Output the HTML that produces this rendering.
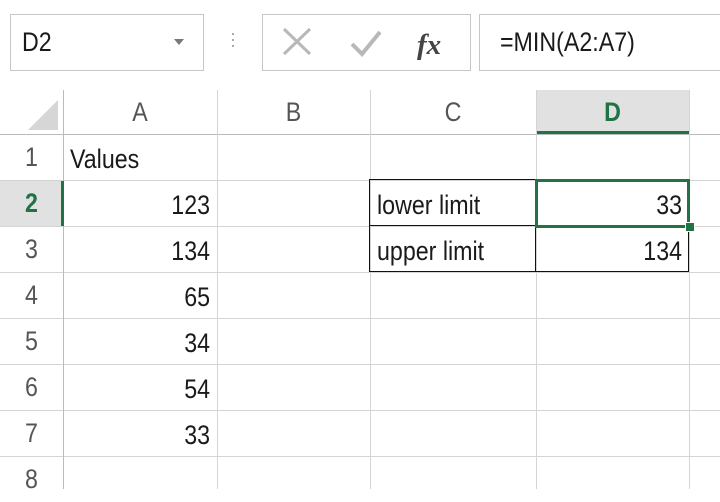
<!DOCTYPE html>
<html><head><style>
body{margin:0;width:720px;height:489px;overflow:hidden;background:#fff;font-family:"Liberation Sans",sans-serif;position:relative;color:#1a1a1a}
.a{position:absolute}
.box{position:absolute;border:1px solid #c6c6c6;background:#fff;box-sizing:border-box}
.t{position:absolute;font-size:27px;line-height:46px;transform:scaleX(.86)}
.r{transform-origin:right center;text-align:right}
.l{transform-origin:left center}
.hl{position:absolute;left:0;width:720px;height:1px;background:#d4d4d4}
.vl{position:absolute;top:90px;width:1px;height:399px;background:#d4d4d4}
.rh{position:absolute;left:0;width:63px;text-align:center;font-size:27px;line-height:46px;color:#555;transform:scaleX(.86)}
.ch{position:absolute;top:90px;height:44px;line-height:44px;text-align:center;font-size:27px;color:#555;transform:scaleX(.86)}
</style></head><body>
<div class="box" style="left:10px;top:14px;width:194px;height:57px"></div>
<div class="t l" style="left:22px;top:19px">D2</div>
<div class="a" style="left:174px;top:39px;width:0;height:0;border-left:5px solid transparent;border-right:5px solid transparent;border-top:6px solid #777"></div>
<div class="a" style="left:232px;top:33px;width:2px;height:2px;background:#aaa;box-shadow:0 6px #aaa,0 12px #aaa"></div>
<div class="box" style="left:262px;top:14px;width:209px;height:57px"></div>
<svg class="a" style="left:262px;top:14px" width="209" height="57"><path d="M22 15 L48 40 M48 15 L22 40" stroke="#b8b8b8" stroke-width="3"/><path d="M90 30 L100 40 L118 18" stroke="#b8b8b8" stroke-width="4" fill="none"/><text x="155" y="40" font-family="Liberation Serif" font-style="italic" font-weight="bold" font-size="29" fill="#444">fx</text></svg>
<div class="box" style="left:479px;top:14px;width:250px;height:57px"></div>
<div class="t l" style="left:500px;top:19px">=MIN(A2:A7)</div>
<div class="a" style="left:536px;top:90px;width:153px;height:44px;background:#e1e1e1"></div>
<div class="a" style="left:536px;top:131px;width:153px;height:3px;background:#217346"></div>
<svg class="a" style="left:20px;top:92px" width="40" height="40"><path d="M38 8 L38 38 L8 38 Z" fill="#d6d6d6"/></svg>
<div class="ch" style="left:63px;width:154px">A</div>
<div class="ch" style="left:217px;width:153px">B</div>
<div class="ch" style="left:370px;width:166px">C</div>
<div class="ch" style="left:536px;width:153px;color:#217346;font-weight:bold">D</div>
<div class="hl" style="top:134px;background:#bbb"></div>
<div class="hl" style="top:180px"></div><div class="hl" style="top:226px"></div><div class="hl" style="top:272px"></div><div class="hl" style="top:318px"></div><div class="hl" style="top:364px"></div><div class="hl" style="top:410px"></div><div class="hl" style="top:456px"></div>
<div class="vl" style="left:63px;background:#bbb"></div><div class="vl" style="left:217px"></div><div class="vl" style="left:370px"></div><div class="vl" style="left:536px"></div><div class="vl" style="left:689px"></div>
<div class="a" style="left:0;top:181px;width:63px;height:45px;background:#e1e1e1"></div>
<div class="a" style="left:61px;top:181px;width:3px;height:45px;background:#217346"></div>
<div class="rh" style="top:134px">1</div>
<div class="rh" style="top:180px;color:#217346;font-weight:bold">2</div>
<div class="rh" style="top:226px">3</div><div class="rh" style="top:272px">4</div><div class="rh" style="top:318px">5</div><div class="rh" style="top:364px">6</div><div class="rh" style="top:410px">7</div><div class="rh" style="top:456px">8</div>
<div class="t l" style="left:70px;top:136px">Values</div>
<div class="t r" style="right:510px;top:182px">123</div>
<div class="t r" style="right:510px;top:228px">134</div>
<div class="t r" style="right:510px;top:274px">65</div>
<div class="t r" style="right:510px;top:320px">34</div>
<div class="t r" style="right:510px;top:366px">54</div>
<div class="t r" style="right:510px;top:412px">33</div>
<div class="a" style="left:369px;top:179px;width:320px;height:93px;border:1px solid #111;box-sizing:border-box"></div>
<div class="a" style="left:369px;top:225px;width:320px;height:1px;background:#111"></div>
<div class="a" style="left:535px;top:179px;width:1px;height:93px;background:#111"></div>
<div class="a" style="left:535px;top:179px;width:155px;height:49px;border:3px solid #217346;box-sizing:border-box"></div>
<div class="a" style="left:685px;top:222px;width:8px;height:8px;background:#217346;border:1px solid #fff"></div>
<div class="t l" style="left:377px;top:182px">lower limit</div>
<div class="t l" style="left:377px;top:228px">upper limit</div>
<div class="t r" style="right:38px;top:182px">33</div>
<div class="t r" style="right:38px;top:228px">134</div>
</body></html>
